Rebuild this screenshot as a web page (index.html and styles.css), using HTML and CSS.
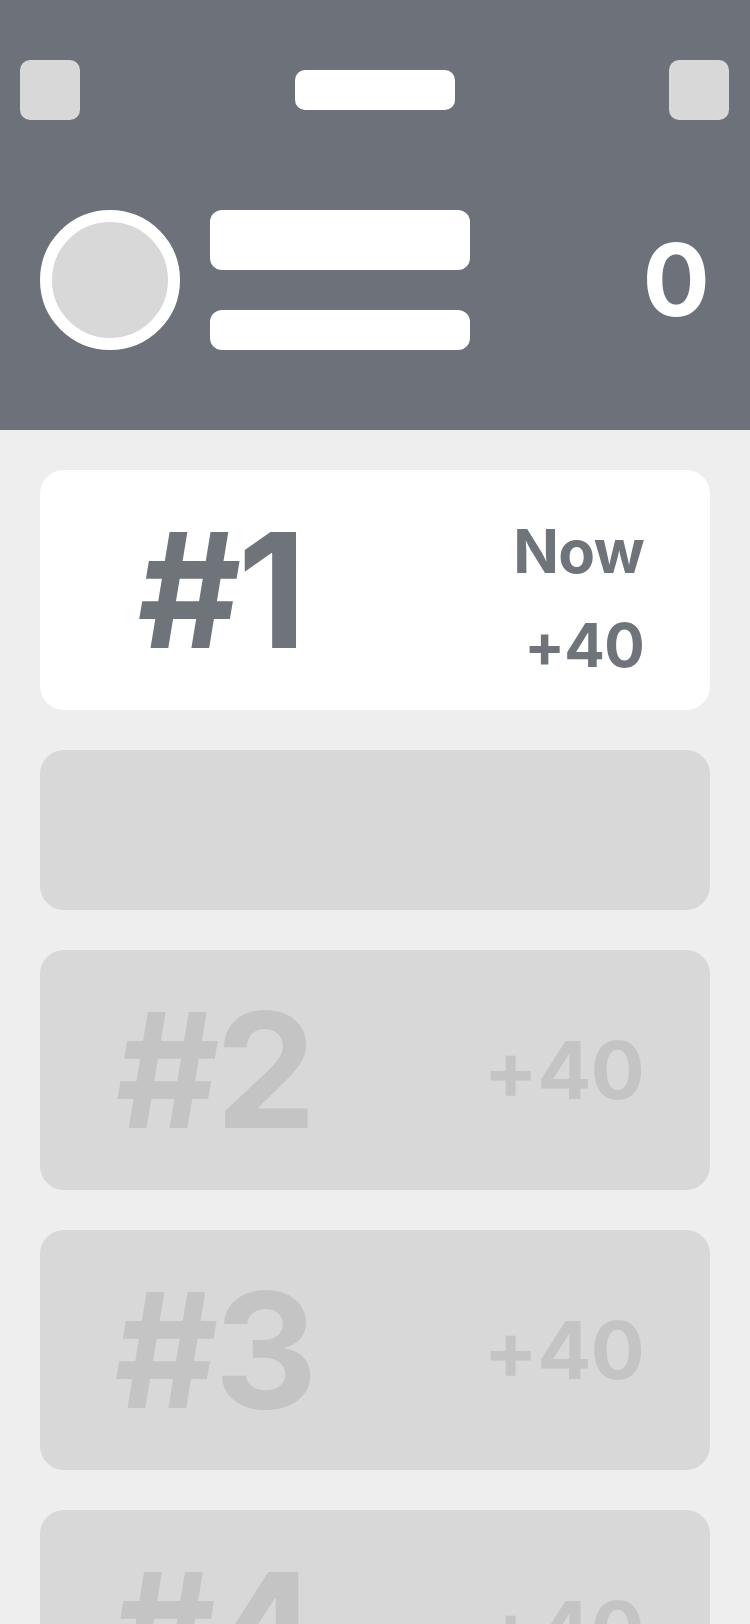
FILE: index.html
```html
<!DOCTYPE html>
<html>
<head>
<meta charset="utf-8">
<link rel="stylesheet" href="styles.css">
</head>
<body>
<header class="header">
  <div class="topbar">
    <div class="sq"></div>
    <div class="pill"></div>
    <div class="sq"></div>
  </div>
  <div class="profile">
    <div class="avatar"></div>
    <div class="lines">
      <div class="line line-lg"></div>
      <div class="line line-sm"></div>
    </div>
    <div class="score">0</div>
  </div>
</header>
<main class="list">
  <div class="card card-active">
    <div class="rank">#1</div>
    <div class="side">
      <div class="side-label">Now</div>
      <div class="side-points">+40</div>
    </div>
  </div>
  <div class="card card-empty"></div>
  <div class="card card-muted">
    <div class="rank">#2</div>
    <div class="side"><div class="points-lg">+40</div></div>
  </div>
  <div class="card card-muted">
    <div class="rank">#3</div>
    <div class="side"><div class="points-lg">+40</div></div>
  </div>
  <div class="card card-muted">
    <div class="rank">#4</div>
    <div class="side"><div class="points-lg">+40</div></div>
  </div>
</main>
</body>
</html>
```
FILE: styles.css
```css
* { box-sizing: border-box; }
html, body { margin: 0; padding: 0; }
body {
  background: #eeeeee;
  font-family: Inter, "Liberation Sans", Arial, sans-serif;
  width: 750px;
  overflow: hidden;
}
.header {
  background: #6d717a;
  padding: 60px 0 80px;
}
.topbar {
  display: flex;
  justify-content: space-between;
  align-items: center;
  height: 60px;
  padding: 0 21px 0 20px;
}
.sq {
  width: 60px;
  height: 60px;
  border-radius: 10px;
  background: #d8d8d8;
}
.pill {
  width: 160px;
  height: 40px;
  border-radius: 10px;
  background: #ffffff;
}
.profile {
  display: flex;
  align-items: center;
  margin-top: 90px;
  padding: 0 40px;
}
.avatar {
  width: 140px;
  height: 140px;
  border-radius: 50%;
  border: 12px solid #ffffff;
  background: #d8d8d8;
  flex: none;
}
.lines {
  margin-left: 30px;
  width: 260px;
  height: 140px;
  display: flex;
  flex-direction: column;
  justify-content: space-between;
}
.line {
  background: #ffffff;
  border-radius: 12px;
}
.line-lg { height: 60px; }
.line-sm { height: 40px; }
.score {
  margin-left: auto;
  color: #ffffff;
  font-weight: 700;
  font-size: 100px;
  line-height: 1;
}
.list {
  display: flex;
  flex-direction: column;
  gap: 40px;
  padding: 40px;
}
.card {
  flex: none;
  height: 240px;
  border-radius: 24px;
  display: flex;
  align-items: center;
}
.card-active { background: #ffffff; color: #6f737a; }
.card-empty { background: #d8d8d8; height: 160px; }
.card-muted { background: #d8d8d8; color: #c4c4c4; }
.rank {
  width: 348px;
  text-align: center;
  font-weight: 700;
  font-size: 160px;
  line-height: 1;
  letter-spacing: -0.025em;
}
.card-active .rank { padding-left: 12px; }
.side {
  margin-left: auto;
  padding-right: 66px;
  text-align: right;
  font-weight: 700;
  line-height: 1;
  letter-spacing: -0.04em;
}
.card-active .side { margin-top: 16px; }
.side-label { font-size: 60px; line-height: 60px; }
.side-points { font-size: 60px; line-height: 60px; margin-top: 34px; }
.points-lg { font-size: 80px; }
```
